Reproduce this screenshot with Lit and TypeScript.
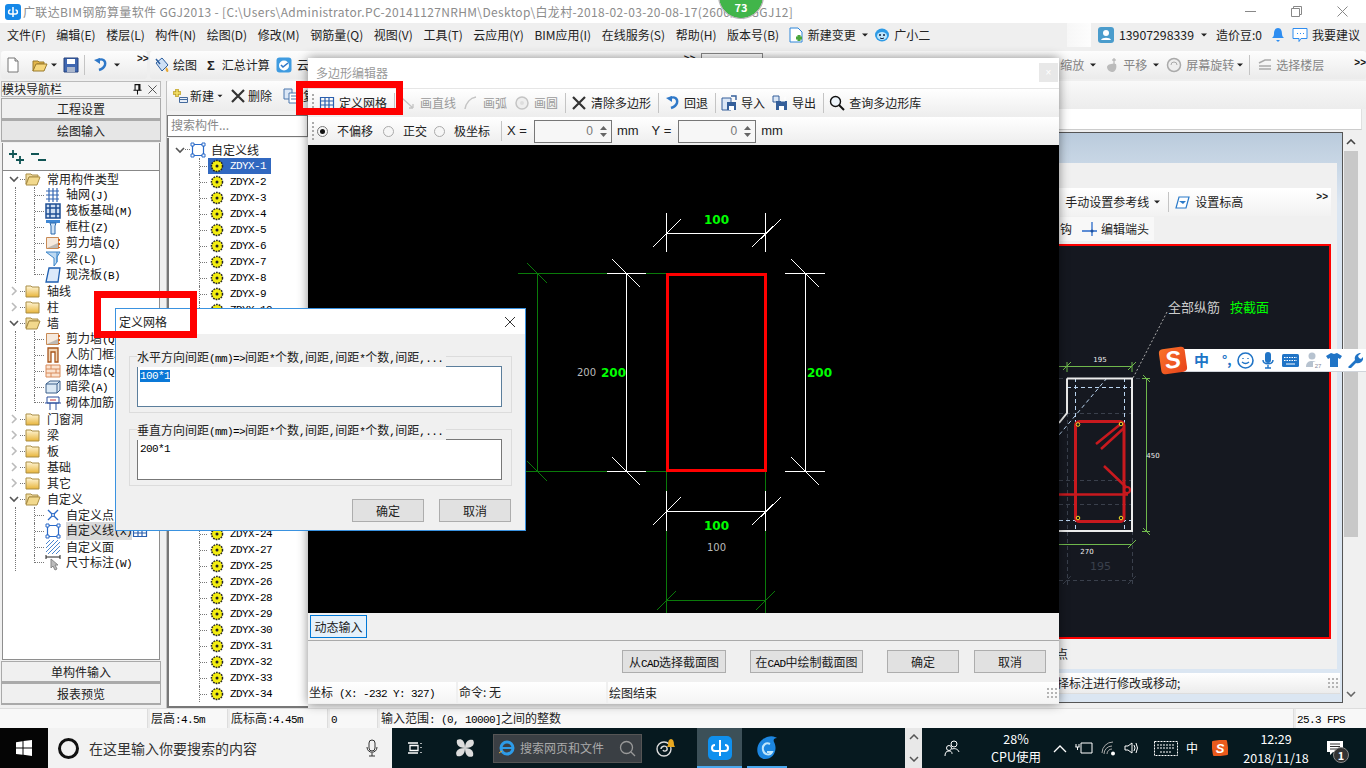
import { LitElement, html, css, svg } from 'lit';
import { customElement } from 'lit/decorators.js';

type Line = number[];

// half width latin next to full width CJK, like the bitmap font of the app
const mix = (text: string) =>
  text.split(/([\x00-\x7f]+)/).map((part, i) => (i % 2 ? html`<span class="lat">${part}</span>` : part));

const icons: Record<string, any> = {
  doc: svg`<path d="M3 1h7l3 3v11H3z" fill="#fff" stroke="#777"/><path d="M10 1v3h3" fill="#ddd" stroke="#777"/>`,
  open: svg`<path d="M1 4h5l1 1h5v2H5L1 14z" fill="#e3b64c" stroke="#9a7a2c"/><path d="M4 7h11l-3 7H1z" fill="#f6d77c" stroke="#9a7a2c"/>`,
  save: svg`<path d="M1 1h14v14H1z" fill="#3f67b1" stroke="#25407a"/><path d="M4 2h8v5H4z" fill="#fff"/><path d="M4 10h8v5H4z" fill="#aab6cc"/>`,
  undo: svg`<path d="M6 3c5-2 8 1 7 5-1 3-3 4-6 5" fill="none" stroke="#2f78c8" stroke-width="2.4"/><path d="M2 3l6-2v6z" fill="#2f78c8"/>`,
  paint: svg`<path d="M2 6l6-5 6 7-6 6z" fill="#cfe0f5" stroke="#2c5e9e"/><path d="M2 2l4 5" stroke="#2c5e9e" stroke-width="1.5"/><path d="M12 10c2 2 3 3 2 5-2 0-3-2-2-5z" fill="#e7a93a"/>`,
  calc: svg`<rect x="0.5" y="0.5" width="15" height="15" rx="3" fill="#3f9be0"/><circle cx="8" cy="8.5" r="5" fill="#fff"/><path d="M5 8l2 2 5-4" fill="none" stroke="#2f78c8" stroke-width="1.6"/>`,
  change: svg`<path d="M2 1h8l4 4v10H2z" fill="#fff" stroke="#2f86d8"/><path d="M8 11h6M11 8v6" stroke="#4aa63c" stroke-width="3"/>`,
  xiao: svg`<ellipse cx="8" cy="8" rx="7" ry="6.5" fill="#2e9be6"/><ellipse cx="8" cy="9" rx="5" ry="4" fill="#bfe6fb"/><circle cx="6" cy="8" r="1" fill="#124"/><circle cx="10" cy="8" r="1" fill="#124"/><path d="M6 11q2 1.4 4 0" fill="none" stroke="#124"/>`,
  user: svg`<rect width="16" height="16" rx="3" fill="#4a9ccc"/><circle cx="8" cy="6" r="3" fill="#fff"/><path d="M3 13c1-3 9-3 10 0z" fill="#fff"/>`,
  bell: svg`<path d="M8 1c3 0 4 3 4 6 0 2 1 3 2 4H2c1-1 2-2 2-4 0-3 1-6 4-6z" fill="#2e8df0"/><path d="M6 13h4l-2 2z" fill="#2e8df0"/>`,
  chat: svg`<path d="M1 1.5h14v10H9l-2 3v-3H1z" fill="#fff" stroke="#2e8df0"/><path d="M5 6.5h1M8 6.5h1M11 6.5h1" stroke="#2e8df0"/>`,
  hand: svg`<path d="M3 10c0-3 6-4 9-3 1 3 0 7-3 8-3 0-6-2-6-5z" fill="#bbb"/><path d="M10 1v6M8 3h4" stroke="#aaa"/>`,
  rotate: svg`<circle cx="8" cy="8" r="6.5" fill="#eee" stroke="#aaa" stroke-width="1.5"/><path d="M5 8a3 3 0 016 0" fill="none" stroke="#aaa"/>`,
  floors: svg`<path d="M2 6l6-3h6M2 9h12M2 12h12" fill="none" stroke="#aaa" stroke-width="1.5"/>`,
  plus: svg`<path d="M5 1v8M1 5h8" stroke="#b99a20" stroke-width="3.5"/><path d="M5 1.5v7M1.5 5h7" stroke="#f6e36b" stroke-width="1.5"/><path d="M7.5 9.5h8v5h-8z" fill="#e8eef7" stroke="#446a9c"/><path d="M7.5 11.5h8" stroke="#446a9c"/>`,
  del: svg`<path d="M2 2l12 12M14 2L2 14" stroke="#333" stroke-width="2.2"/>`,
  copy: svg`<path d="M1 1h8v10H1z" fill="#dbe7f6" stroke="#4a77ad"/><path d="M6 5h9v10H6z" fill="#fff" stroke="#4a77ad"/><path d="M8 8h5M8 11h5" stroke="#4a77ad"/>`,
  pin: svg`<path d="M5 2h6v7H5zM3 9h10M8 9v5" fill="none" stroke="#111" stroke-width="1.3"/><path d="M9 2h2v7H9z" fill="#111"/>`,
  close: svg`<path d="M3 3l10 10M13 3L3 13" stroke="#333" stroke-width="1"/>`,
  expand: svg`<path d="M5 1v8M1 5h8M12 7v8M8 11h8" stroke="#155" stroke-width="1.8"/>`,
  collapse: svg`<path d="M1 5h8M8 11h8" stroke="#155" stroke-width="1.8"/>`,
  folder: svg`<path d="M1 3h5l1 1h7v10H1z" fill="url(#fld)" stroke="#a98d45"/>`,
  folderopen: svg`<path d="M1 3h5l1 1h6v2H4l-3 7z" fill="#f0dca0" stroke="#a98d45"/><path d="M4 6h11l-3 8H1z" fill="#f2d98d" stroke="#a98d45"/>`,
  grid: svg`<path d="M1 4h13M1 8h13M1 12h13M4 1v14M8 1v14M12 1v14" stroke="#3467b4" stroke-width="1.2"/>`,
  raft: svg`<path d="M1 1h14v14H1zM1 5h14M1 11h14M5 1v14M11 1v14" fill="#cfdff2" stroke="#1f4f94" stroke-width="1.5"/>`,
  column: svg`<path d="M1 1h14v3H1z" fill="#3f87d4"/><path d="M5 4h6l-1 3v8H6V7z" fill="#cfe3f7" stroke="#2a68ad"/>`,
  wall: svg`<path d="M1.5 2.5h12v11h-12z" fill="#f6e9dc" stroke="#c88a55"/><path d="M2 13l11-5v5z" fill="#999" opacity=".6"/><path d="M14 4v2M14 8v2M14 12v1" stroke="#d4641e" stroke-width="2"/>`,
  beam: svg`<path d="M1 1h14l-3 5v5l-3 4V7z" fill="#bcd9f2" stroke="#3d86c9"/><path d="M12 1v10" stroke="#3d86c9"/>`,
  slab: svg`<path d="M4 1h11l-2 14H1z" fill="#dbe9fa" stroke="#1f5fb0" stroke-width="1.3"/>`,
  door: svg`<path d="M3 1h10v14h-3V5H6v10H3z" fill="#f1d6b7" stroke="#a8551c" stroke-width="1.3"/>`,
  brick: svg`<path d="M1 2h14v12H1zM1 6h14M1 10h14M6 2v4M11 6v4M6 10v4" fill="#fbe3d0" stroke="#d88a5a"/>`,
  hidden: svg`<path d="M1 5l4-3h10v9l-3 3H1z" fill="#dbe9f5" stroke="#3b5f8a"/><path d="M1 5h11v9M12 5l3-3" fill="none" stroke="#3b5f8a"/>`,
  rebar: svg`<path d="M2 2h12v6H2zM0 8h16M5 8v7M11 8v7" fill="#fff" stroke="#2a4e9c"/><path d="M5 5h6" stroke="#c33"/>`,
  point: svg`<path d="M3 3l10 10M13 3L3 13" stroke="#2a6ac9" stroke-width="1.4"/><circle cx="8" cy="8" r="1.5" fill="#fff" stroke="#2a6ac9"/>`,
  line: svg`<path d="M2.5 2.5h11v11h-11z" fill="none" stroke="#2a6ac9" stroke-width="1.2"/><path d="M1 1h3v3H1zM12 1h3v3h-3zM1 12h3v3H1zM12 12h3v3h-3z" fill="#fff" stroke="#2a6ac9"/>`,
  hatch: svg`<path d="M1 5l4-4M1 9l8-8M1 13L13 1M3 15L15 3M7 15l8-8M11 15l4-4" stroke="#4a86cf"/>`,
  dim: svg`<path d="M1 2h14M1 0v4M15 0v4" stroke="#222"/><path d="M6 4l7 6-3 0 2 4-2 1-2-4-2 2z" fill="#bbb" stroke="#888"/>`,
  gear: svg`<circle cx="8" cy="8" r="5.5" fill="#f4ee10" stroke="#222" stroke-width="1.5" stroke-dasharray="1.7 1"/><circle cx="8" cy="8" r="1.5" fill="#222"/>`,
  mesh: svg`<path d="M1.5 2.5h13v11h-13zM1.5 6h13M1.5 10h13M6 2.5v11M10 2.5v11" fill="none" stroke="#2a5fae" stroke-width="1.2"/>`,
  segment: svg`<path d="M2 3l11 10M13 13V9M13 13H9" fill="none" stroke="#c4c4c4" stroke-width="1.3"/>`,
  arc: svg`<path d="M2 14C3 8 7 3 13 2" fill="none" stroke="#c4c4c4" stroke-width="1.5"/>`,
  circle: svg`<circle cx="8" cy="8" r="6" fill="#eee" stroke="#c4c4c4" stroke-width="1.5"/><circle cx="8" cy="8" r="2" fill="#ddd"/>`,
  import: svg`<path d="M1 3h9v12H1z" fill="#dbe7f6" stroke="#355f9a"/><path d="M6 7h9v8H6z" fill="#355f9a"/><path d="M8 11h5v4H8z" fill="#fff"/><path d="M10 1h5v4" fill="none" stroke="#355f9a" stroke-width="1.4"/>`,
  export: svg`<path d="M1 1h6v6H1z" fill="#dbe7f6" stroke="#355f9a"/><path d="M4 6h11v9H4z" fill="#355f9a"/><path d="M7 11h5v4H7z" fill="#fff"/><path d="M9 6h4V2" fill="none" stroke="#fff"/>`,
  search: svg`<circle cx="6.5" cy="6.5" r="5" fill="#eef5fb" stroke="#111" stroke-width="1.4"/><path d="M10 10l5 5" stroke="#111" stroke-width="2"/>`,
  level: svg`<path d="M5 3h10l-3 11H2z" fill="#fff" stroke="#2a7ac9" stroke-width="1.2"/><path d="M5 7h7l-3 3z" fill="#2a7ac9"/>`,
  endpoint: svg`<path d="M0 10h15M10 1v14" stroke="#2a6ac9" stroke-width="1.3"/><circle cx="10" cy="10" r="1.5" fill="#1d4f9c"/>`,
  caret: svg`<path d="M4 6h8l-4 4z" fill="#222"/>`,
};

const ic = (name: string, size = 16) =>
  html`<svg class="ic" width=${size} height=${size} viewBox="0 0 16 16">${icons[name]}</svg>`;

const chevron = (open: boolean) =>
  html`<svg class="chev" width="10" height="10" viewBox="0 0 10 10">
    <path d=${open ? 'M1 3l4 4 4-4' : 'M3 1l4 4-4 4'} fill="none" stroke=${open ? '#555' : '#bbb'} stroke-width="1.6"/>
  </svg>`;

const menus = ['文件(F)', '编辑(E)', '楼层(L)', '构件(N)', '绘图(D)', '修改(M)', '钢筋量(Q)', '视图(V)', '工具(T)', '云应用(Y)', 'BIM应用(I)', '在线服务(S)', '帮助(H)', '版本号(B)'];

const navTree: any[] = [
  { label: '常用构件类型', open: true },
  { label: '轴网(J)', icon: 'grid' },
  { label: '筏板基础(M)', icon: 'raft' },
  { label: '框柱(Z)', icon: 'column' },
  { label: '剪力墙(Q)', icon: 'wall' },
  { label: '梁(L)', icon: 'beam' },
  { label: '现浇板(B)', icon: 'slab', last: true },
  { label: '轴线' },
  { label: '柱' },
  { label: '墙', open: true },
  { label: '剪力墙(Q)', icon: 'wall' },
  { label: '人防门框墙(RF)', icon: 'door' },
  { label: '砌体墙(Q)', icon: 'brick' },
  { label: '暗梁(A)', icon: 'hidden' },
  { label: '砌体加筋(Y)', icon: 'rebar', last: true },
  { label: '门窗洞' },
  { label: '梁' },
  { label: '板' },
  { label: '基础' },
  { label: '其它' },
  { label: '自定义', open: true },
  { label: '自定义点', icon: 'point' },
  { label: '自定义线(X)', icon: 'line', active: true },
  { label: '自定义面', icon: 'hatch' },
  { label: '尺寸标注(W)', icon: 'dim', last: true },
];

// rows 11 to 23 sit behind the dialog and the editor
const zdyxTop = [1, 2, 3, 4, 5, 6, 7, 8, 9, 10];
const zdyxBottom = [24, 27, 25, 26, 28, 29, 30, 31, 32, 33, 34];

const editorTools: [string, string, boolean, boolean][] = [
  ['mesh', '定义网格', false, true],
  ['segment', '画直线', true, false],
  ['arc', '画弧', true, false],
  ['circle', '画圆', true, true],
  ['del', '清除多边形', false, true],
  ['undo', '回退', false, true],
  ['import', '导入', false, false],
  ['export', '导出', false, true],
  ['search', '查询多边形库', false, false],
];

// main drawing, in page coordinates
const whiteLines: Line[] = [
  [666.5, 233.5, 765.5, 233.5], [666.5, 213, 666.5, 252], [765.5, 213, 765.5, 252],
  [653, 247, 681, 219], [752, 247, 781, 219],
  [626.5, 273, 626.5, 471], [607, 273.5, 646, 273.5], [607, 471.5, 646, 471.5],
  [612, 259, 640, 287], [612, 457, 640, 485],
  [805.5, 273, 805.5, 471], [785, 273.5, 825, 273.5], [785, 471.5, 825, 471.5],
  [791, 259, 819, 287], [791, 457, 819, 485],
  [666.5, 511.5, 765.5, 511.5], [666.5, 491, 666.5, 531], [765.5, 491, 765.5, 531],
  [653, 525, 681, 497], [752, 525, 781, 497],
];
const greenLines: Line[] = [
  [518, 273.5, 607, 273.5], [646, 273.5, 667, 273.5], [537.5, 273, 537.5, 471],
  [526, 471.5, 607, 471.5], [646, 471.5, 667, 471.5], [527, 263, 547, 283], [527, 461, 547, 481],
  [666.5, 471, 666.5, 491], [765.5, 471, 765.5, 491], [666.5, 531, 666.5, 613], [765.5, 531, 765.5, 613],
  [666.5, 600.5, 765.5, 600.5], [657, 610, 676, 591], [756, 610, 775, 591],
];
const cadGreens: Line[] = [
  [1059, 366.5, 1132, 366.5], [1067, 362, 1067, 372], [1132, 362, 1132, 372], [1063, 370, 1071, 362], [1128, 370, 1136, 362],
  [1146.5, 378, 1146.5, 532], [1142, 378.5, 1150, 378.5], [1142, 531.5, 1150, 531.5], [1143, 375, 1150, 382], [1143, 528, 1150, 535],
  [1059, 544.5, 1132, 544.5], [1128, 548, 1136, 540],
];
const cadDark: Line[] = [
  [1059, 378.5, 1150, 378.5], [1059, 413.5, 1132, 413.5], [1059, 480.5, 1132, 480.5], [1059, 504.5, 1132, 504.5],
  [1059, 580.5, 1136, 580.5], [1067.5, 378, 1067.5, 586], [1132.5, 531, 1132.5, 586], [1128, 584, 1136, 576], [1063, 584, 1071, 576],
];
const cadDashed: Line[] = [
  [1067, 387.5, 1132, 387.5], [1075.5, 378, 1075.5, 530], [1124.5, 378, 1124.5, 530],
  [1107, 378, 1059, 435], [1059, 520.5, 1132, 520.5],
];
const lines = (list: Line[], cls: string) =>
  list.map(([a, b, c, d]) => svg`<line class=${cls} x1=${a} y1=${b} x2=${c} y2=${d}></line>`);

@customElement('app-root')
export class AppRoot extends LitElement {
  static styles = css`
    :host {
      display: flex;
      flex-direction: column;
      position: relative;
      width: 1366px;
      height: 768px;
      overflow: hidden;
      background: #f0f0f0;
      color: #222;
      font: 12px/16px "Noto Sans CJK SC", "Liberation Sans", sans-serif;
    }
    .ic { flex: none; display: block; }
    .chev { flex: none; display: block; }
    .lat { font-family: "Liberation Mono", monospace; font-size: 11px; letter-spacing: -.6px; color: #000; }
    .defs { position: absolute; }

    .titlebar { display: flex; align-items: center; flex: none; height: 23px; padding-left: 5px; background: #fff; color: #8c8c8c; letter-spacing: .35px; white-space: nowrap; }
    .logo { width: 16px; height: 16px; border-radius: 3px; background: #1588e8; margin-right: 2px; display: flex; align-items: center; justify-content: center; }
    .wincontrols { display: flex; margin-left: auto; margin-right: 1px; }
    .wincontrols span { display: flex; justify-content: center; width: 46px; }

    .menubar { display: flex; align-items: center; flex: none; height: 24px; padding-left: 7px; gap: 10.6px; background: #efefef; white-space: nowrap; }
    .menubar .tool { display: flex; align-items: center; gap: 4px; }
    .menubar .change { margin-left: -2px; }
    .menubar .change .ic:last-child { margin-left: -1px; }
    .menubar .xiaoer { margin-left: -7px; }
    .menubar .right { display: flex; align-items: center; margin-left: auto; margin-right: 6px; gap: 4px; }
    .menubar .lighter { width: 24px; height: 24px; margin-right: 3px; background: linear-gradient(90deg, #f7f7f7, #fdfdfd); }
    .menubar .num { font-size: 12.3px; margin-left: 1px; }
    .menubar .beans { margin: 0 4px 0 2px; }
    .menubar .chaticon { margin-left: 2px; }

    .toolbar { display: flex; flex: none; height: 34px; padding: 4px 0 1px 1px; gap: 3px; background: #efefef; box-sizing: border-box; }
    .tgroup { display: flex; align-items: center; padding-left: 4px; height: 28px; border-radius: 3px; background: linear-gradient(#fdfdfd, #ebebeb); white-space: nowrap; }
    .tgroup.fixed { flex: none; width: 146px; box-sizing: border-box; }
    .tgroup.wide { flex: 1; }
    .more { font: bold 10px/10px "Liberation Sans", sans-serif; align-self: flex-start; margin-top: 3px; }
    .sep { flex: none; width: 1px; height: 20px; background: #c4c4c4; }
    .t-open { margin-left: 11px; }
    .t-save { margin: 0 5px 0 3px; }
    .t-undo { margin: 0 3px 0 7px; }
    .t-more { margin-left: 14px; }
    .t-paint { margin: 0 10px 0 3px; }
    .t-sigma { font: 700 13px "Liberation Sans", sans-serif; margin-right: 7px; }
    .t-sum { margin-right: 6px; }
    .t-cloud { margin-left: 5px; }
    .t-hiddenmore { margin-left: 375px; }
    .combo { flex: none; align-self: flex-end; width: 62px; height: 26px; margin-left: 5px; border: 1px solid #888; background: #fff; box-sizing: border-box; }
    .faded { display: flex; align-items: center; color: #858585; margin-left: auto; }
    .f-caret0 { margin: 0 5px 0 3px; }
    .f-hand { margin-right: 3px; }
    .f-caret1 { margin: 0 4px 0 3px; }
    .f-rotate { margin-right: 4px; }
    .f-sep { margin: 0 7px 0 3px; }
    .f-floors { margin: 0 30px 0 3px; }
    .f-more { color: #111; }

    .main { display: flex; flex: 1; min-height: 0; }
    .nav { display: flex; flex-direction: column; flex: none; width: 162px; padding: 0 1px 3px; box-sizing: border-box; }
    .navtitle { display: flex; align-items: center; justify-content: space-between; flex: none; height: 16px; box-sizing: border-box; padding-right: 1px; border: 1px solid #bbb; background: #f3f3f3; }
    .navtitle div { display: flex; gap: 2px; }
    .navbtn { flex: none; height: 22px; line-height: 20px; box-sizing: border-box; text-align: center; border: 1px solid #aaa; border-width: 1px 1px 2px 1px; background: #f0f0f0; }
    .navbtn.top { margin-top: 1px; }
    .navbtn.pressed { background: #e6e6e6; }
    .navtree { flex: 1; margin: 1px 1px 1px; display: flex; flex-direction: column; border: 1px solid #8e8e8e; border-width: 0 1px 1px; background: #fff; overflow: hidden; min-height: 0; }
    .navtools { display: flex; align-items: center; flex: none; gap: 6px; height: 28px; box-sizing: border-box; padding-left: 5px; border-bottom: 1px solid #888; background: #f8f8f8; }
    .treebody { flex: 1; min-height: 0; }
    .row { display: flex; align-items: center; height: 16px; white-space: nowrap; }
    .row.root { padding-left: 6px; }
    .row.root .stub { width: 6px; margin-left: 1px; }
    .stub { height: 1px; background: repeating-linear-gradient(90deg, #777 0 1px, transparent 1px 2px); }
    .rootfolder { margin: 0 6px 0 -1px; }
    .row.child { padding-left: 12px; }
    .g1 { flex: none; width: 19px; height: 16px; box-sizing: border-box; border-left: 1px dotted #777; }
    .g2 { flex: none; width: 11px; height: 16px; box-sizing: border-box; border-left: 1px dotted #777; display: flex; align-items: center; }
    .g2 .stub { flex: 1; }
    .g2.last { height: 8px; align-self: flex-start; align-items: flex-end; }
    .lbl { margin-left: 5px; }
    .child.active .lbl { background: #d9d9d9; }
    .child.active .mini { flex: none; }

    .list { display: flex; flex-direction: column; flex: none; width: 141px; margin-left: 4px; border-left: 1px solid #c0c0c0; }
    .listtools { display: flex; align-items: center; flex: none; height: 30px; padding-left: 5px; background: linear-gradient(#fdfdfd, #ececec); border-radius: 3px; white-space: nowrap; }
    .l-new { margin-left: 2px; }
    .l-caret { margin: 0 5px 0 1px; }
    .l-del { margin: 0 5px 0 2px; }
    .l-copy { margin: 0 4px 0 6px; }
    .searchbox { flex: none; height: 22px; box-sizing: border-box; line-height: 18px; margin-top: 4px; padding-left: 3px; border: 1px solid #777; color: #888; background: #fff; }
    .listtree { flex: 1; margin-top: 1px; padding-top: 3px; min-height: 0; overflow: hidden; background: #fff; border: 1px solid #777; border-width: 0 0 2px 2px; }
    .listroot { display: flex; align-items: center; height: 17px; padding-left: 6px; }
    .listroot .stub { width: 5px; }
    .listroot span:last-child { margin-left: 5px; }
    .item { display: flex; align-items: center; height: 16px; padding-left: 30px; }
    .vguide { flex: none; width: 9px; height: 16px; box-sizing: border-box; border-left: 1px dotted #777; display: flex; align-items: center; }
    .vguide .stub { flex: 1; }
    .item .sel { display: flex; align-items: center; gap: 5px; height: 16px; padding: 0 5px 0 1px; font: 11px/16px "Liberation Mono", monospace; letter-spacing: -.6px; color: #000; }
    .item .sel.on { background: #3168c0; color: #fff; }
    .skip { height: 208px; margin-left: 30px; box-sizing: border-box; border-left: 1px dotted #777; }

    .work { display: flex; flex-direction: column; flex: 1; min-width: 0; }
    .workstrip { flex: none; height: 28px; background: linear-gradient(#f9f9f9, #ececec); }
    .workinput { flex: none; height: 21px; box-sizing: border-box; margin-right: 4px; background: #fff; border-bottom: 1px solid #ccc; border-right: 1px solid #e0e0e0; }
    .workrow { display: flex; flex: 1; min-height: 0; margin-top: 2px; padding-bottom: 5px; }
    .frame { display: flex; flex-direction: column; flex: 1; min-width: 0; padding: 0 5px 8px 0; border: 1px solid #555; border-width: 1px 1px 1px 0; background: linear-gradient(#bacbdc, #dbe6f2 70px); box-sizing: border-box; }
    .framepanel { flex: 1; display: flex; flex-direction: column; min-height: 0; margin-top: 30px; padding: 25px 6px 0 0; background: #f0f0f0; }
    .toolrow { display: flex; align-items: center; justify-content: flex-end; flex: none; height: 28px; box-sizing: border-box; padding: 0 3px 2px 0; border-top: 1px solid #fff; background: linear-gradient(#fff, #f2f2f2); gap: 5px; }
    .toolrow .more { margin-left: 68px; }
    .toolrow .tight { margin-right: -3px; }
    .toolrow2 { display: flex; justify-content: flex-end; flex: none; height: 28px; padding: 1px 177px 3px 0; box-sizing: border-box; }
    .toolrow2 div { display: flex; align-items: center; gap: 3px; padding: 0 5px 0 0; background: #f8f8f8; }
    .toolrow2 i { width: 4px; }
    .cad { flex: none; display: flex; justify-content: flex-end; height: 395px; box-sizing: border-box; border: 2px solid #f00; background: #151820; }
    .cad svg { display: block; flex: none; }
    .framefoot { flex: 1; display: flex; align-items: center; padding-left: 748px; background: #f0f0f0; }
    .framestatus { display: flex; align-items: center; flex: none; height: 21px; box-sizing: border-box; margin-top: 4px; margin-right: -3px; padding: 0 2px 0 749px; background: linear-gradient(#fff, #ececec); border-bottom: 1px solid #ddd; white-space: nowrap; }
    .corner { flex: none; width: 10px; height: 10px; margin-left: auto; background: radial-gradient(circle at 1px 1px, #b4b4b4 1px, transparent 1.3px) 0 0/4px 4px; }
    .scroll { display: flex; flex-direction: column; flex: none; width: 14px; margin: 1px 8px 0 1px; background: #f0f0f0; }
    .scroll span { flex: none; display: flex; justify-content: center; align-items: center; height: 18px; }
    .scroll i { flex: none; display: block; height: 386px; background: #c8c8c8; }
    .scroll b { flex: 1; }

    .statusbar { display: flex; flex: none; height: 20px; gap: 2px; background: #ececec; border-top: 1px solid #ddd; box-sizing: border-box; }
    .statusbar div { padding-left: 1px; line-height: 18px; height: 19px; box-sizing: border-box; background: #f8f8f8; border-right: 1px solid #ddd; white-space: nowrap; }
    .s0 { width: 148px; }
    .s1 { width: 78px; }
    .s2 { width: 98px; }
    .s3 { width: 48px; }
    .statusbar .grow { flex: 1; }
    .statusbar .s4 { width: 70px; border-right: 0; }

    .taskbar { display: flex; align-items: center; flex: none; height: 40px; background: #06191f; color: #fff; }
    .start { display: flex; align-items: center; justify-content: center; width: 48px; height: 40px; background: #050505; }
    .cortana { display: flex; align-items: center; width: 344px; height: 40px; padding-left: 10px; box-sizing: border-box; background: #f2f2f2; color: #333; font-size: 14px; }
    .ring { width: 15px; height: 15px; margin-right: 10px; border: 3px solid #111; border-radius: 50%; }
    .cortana svg { margin-left: 107px; }
    .tb-btn { display: flex; align-items: center; justify-content: center; flex: none; height: 40px; }
    .tb-view { width: 46px; }
    .tb-wheel { width: 54px; }
    .tb-swirl { width: 55px; padding-right: 10px; box-sizing: border-box; }
    .tb-people { width: 16px; margin-left: 22px; }
    .tb-search { display: flex; align-items: center; width: 149px; height: 29px; margin-left: 1px; padding-left: 4px; box-sizing: border-box; gap: 4px; background: #3a3f44; border: 1px solid #555; color: #aaa; }
    .tb-search span { flex: 1; }
    .tb-search svg:last-child { margin-right: 5px; }
    .tile { position: relative; width: 45px; background: #3c5058; }
    .tile2 { position: relative; width: 40px; margin-left: 5px; }
    .tile::after, .tile2::after { content: ""; position: absolute; left: 0; right: 0; bottom: 0; height: 2px; background: #4aa8ee; }
    .scrollstrip { display: flex; flex-direction: column; justify-content: space-between; align-items: center; width: 17px; height: 40px; margin-left: 118px; padding: 6px 0; box-sizing: border-box; background: #e8e8e8; }
    .cpu { width: 70px; margin-left: 21px; text-align: center; line-height: 18px; font-size: 12.5px; }
    .tray { display: flex; align-items: center; gap: 8px; margin-left: 2px; }
    .tray .kbd { margin-left: 6px; }
    .tray .sogou { margin-left: 6px; }
    .clock { width: 82px; margin-left: 7px; text-align: center; line-height: 19px; font-size: 12.5px; }
    .notify { position: relative; flex: none; margin-left: 10px; width: 22px; height: 40px; }
    .notify svg { display: block; margin-top: 12px; }
    .badge { position: absolute; left: 6px; top: 19px; width: 16px; height: 16px; line-height: 15px; text-align: center; border-radius: 50%; background: #333; border: 1px solid #888; box-sizing: border-box; font-weight: 700; font-size: 11px; }

    /* windows and overlays on the desktop */
    .editor { position: absolute; left: 308px; top: 58px; display: flex; flex-direction: column; width: 751px; height: 646px; background: #f0f0f0; box-shadow: 0 0 10px rgba(0, 0, 0, .45); }
    .edtitle { display: flex; align-items: center; justify-content: space-between; flex: none; height: 31px; padding: 0 1px 0 8px; color: #999; background: #fff; border-bottom: 1px solid #e6e6e6; box-sizing: border-box; }
    .edclose { width: 19px; height: 19px; margin-bottom: 2px; display: flex; align-items: center; justify-content: center; background: #e8e8e8; color: #fff; font: 10px "Liberation Sans", sans-serif; }
    .edtools { display: flex; align-items: center; flex: none; height: 28px; padding-left: 4px; background: linear-gradient(#fff, #ededed); white-space: nowrap; }
    .grip { flex: none; width: 2px; height: 18px; margin-right: 5px; background: repeating-linear-gradient(#aaa 0 2px, transparent 2px 4px); }
    .edtool { display: flex; align-items: center; gap: 4px; }
    .edtool.off { color: #9a9a9a; }
    .edtools .sep { margin: 0 5px 0 7px; }
    .sp { flex: none; width: 7px; }
    .edoptions { display: flex; align-items: center; flex: none; height: 28px; padding-left: 4px; background: linear-gradient(#fff, #ededed); white-space: nowrap; }
    .edoptions .grip { margin-right: 3px; }
    .edoptions .sep { margin: 0 5px 0 11px; }
    .radio { flex: none; width: 11px; height: 11px; margin-right: 9px; border: 1px solid #aaa; border-radius: 50%; box-sizing: border-box; background: #f6f6f6; display: flex; align-items: center; justify-content: center; }
    .radio.on { border-color: #777; }
    .radio.on::after { content: ""; width: 5px; height: 5px; border-radius: 50%; background: #111; }
    .opt { margin-right: 10px; }
    .opt.near { margin-right: 7px; }
    .opt.end { margin-right: 0; }
    .spin { display: flex; align-items: center; justify-content: flex-end; width: 78px; height: 23px; margin: 0 5px 0 7px; padding-right: 4px; border: 1px solid #777; box-sizing: border-box; color: #777; background: #f7f7f7; font-family: "Liberation Sans", sans-serif; gap: 7px; }
    .spinbtn { display: flex; flex-direction: column; gap: 3px; }
    .fld { font-family: "Liberation Sans", sans-serif; font-size: 13px; }
    .fld.mid { margin-right: 13px; }
    .edcanvas { flex: none; height: 468px; background: #000; }
    .edcanvas svg { display: block; }
    .dyn { flex: none; height: 28px; box-sizing: border-box; padding: 2px 0 0 2px; border-bottom: 1px solid #aaa; background: #f0f0f0; }
    .dyn span { display: block; width: 57px; height: 23px; line-height: 21px; text-align: center; box-sizing: border-box; border: 1px solid #0078d7; background: #e5f1fb; }
    .edbtns { display: flex; justify-content: flex-end; align-items: flex-start; flex: 1; padding: 9px 13px 0 0; gap: 24px; }
    .winbtn { height: 23px; line-height: 21px; text-align: center; box-sizing: border-box; border: 1px solid #adadad; background: #e1e1e1; }
    .w72 { width: 72px; }
    .w104 { width: 104px; }
    .w113 { width: 113px; }
    .edbtns .w72:last-child { margin-left: -9px; }
    .edstatus { display: flex; flex: none; height: 21px; gap: 2px; margin-bottom: 1px; }
    .edstatus div { line-height: 19px; padding-left: 1px; background: linear-gradient(#fff, #f4f4f4); box-sizing: border-box; }
    .c148 { width: 148px; }
    .edstatus .rest { display: flex; align-items: center; flex: 1; padding-right: 2px; }

    .dialog { position: absolute; left: 115px; top: 308px; display: flex; flex-direction: column; width: 411px; height: 223px; box-sizing: border-box; border: 1px solid #3a92e0; background: #f0f0f0; }
    .dltitle { display: flex; align-items: center; justify-content: space-between; flex: none; height: 25px; padding: 0 7px 0 3px; background: #fff; }
    .dlgroup { position: relative; height: 57px; margin: 0 13px; border: 1px solid #dcdcdc; padding: 9px 9px 0 7px; box-sizing: border-box; }
    .dlgroup.first { margin-top: 22px; }
    .dlgroup.second { margin-top: 16px; }
    .legend { position: absolute; left: 7px; top: -8px; padding-right: 3px; background: #f0f0f0; white-space: nowrap; }
    .area { height: 41px; padding: 3px 2px; box-sizing: border-box; border: 1px solid #777; background: #fff; font: 11px/13px "Liberation Mono", monospace; letter-spacing: -.6px; color: #000; }
    .area.focus { border-color: #5b7e9c; }
    .area mark { background: #0a78d7; color: #fff; }
    .dlbtns { display: flex; justify-content: flex-end; flex: none; gap: 15px; margin-top: 13px; padding-right: 14px; }

    .redbox { position: absolute; box-sizing: border-box; border: 7px solid #f00; }
    .r1 { left: 296px; top: 81px; width: 107px; height: 34px; }
    .r2 { left: 94px; top: 291px; width: 103px; height: 47px; }

    .bubble { position: absolute; left: 717px; top: 0; width: 48px; height: 20px; background: radial-gradient(circle at 24px -4px, #41b54a 0 21.5px, #b5b5b5 22px 22.5px, transparent 23.5px); color: #fff; font-weight: 700; font-size: 11px; text-align: center; line-height: 14px; }

    .ime { position: absolute; left: 1160px; top: 347px; display: flex; align-items: center; width: 206px; height: 27px; }
    .ime .logo-s { position: relative; flex: none; width: 26px; height: 25px; margin-right: -6px; transform: rotate(-8deg); border-radius: 4px; background: linear-gradient(135deg, #f9722a, #e8431a); color: #fff; font: italic 700 24px/24px "Liberation Sans", sans-serif; text-align: center; }
    .ime .imebar { display: flex; flex: 1; align-items: center; height: 23px; padding-left: 14px; box-sizing: border-box; background: #fff; border-bottom: 1px solid #d0d4da; color: #2074c6; }
    .ime .zh { flex: none; width: 15px; font-size: 15px; font-weight: 700; margin-right: 13px; }
    .ime .pun { flex: none; width: 15px; font-size: 13px; font-weight: 700; }
    .ime .m8 { margin-right: 8px; }
    .ime .m6 { margin-right: 6px; }
    .ime .m3 { margin-right: 3px; }
    .ime .m5 { margin-right: 5px; }
  `;

  private navRow(node: any) {
    if (!node.icon) {
      return html`<div class="row root">
        ${chevron(!!node.open)}<span class="stub"></span>
        <span class="rootfolder">${ic(node.open ? 'folderopen' : 'folder')}</span>${node.label}
      </div>`;
    }
    return html`<div class="row child ${node.active ? 'active' : ''}">
      <span class="g1"></span><span class="g2 ${node.last ? 'last' : ''}"><span class="stub"></span></span>
      ${ic(node.icon)}<span class="lbl">${mix(node.label)}</span>
      ${node.active ? html`<span class="mini">${ic('mesh')}</span>` : ''}
    </div>`;
  }

  private zdyxRow(n: number) {
    return html`<div class="item">
      <span class="vguide"><span class="stub"></span></span>
      <span class="sel ${n === 1 ? 'on' : ''}">${ic('gear')}ZDYX-${n}</span>
    </div>`;
  }

  private cadMain() {
    return html`<svg width="751" height="468" viewBox="308 145 751 468">
      <g shape-rendering="crispEdges" fill="none">
        <g stroke="#0a7a0a">${lines(greenLines, 'g')}</g>
        <g stroke="#fff">${lines(whiteLines, 'w')}</g>
        <rect x="667.5" y="274.5" width="98" height="196" stroke="#f00" stroke-width="3.5"></rect>
      </g>
      <g font-family="DejaVu Sans" font-weight="700" font-size="12" fill="#00ff00" text-anchor="middle">
        <text x="716.5" y="224">100</text>
        <text x="716.5" y="530">100</text>
        <text x="613.5" y="377">200</text>
        <text x="819.5" y="377">200</text>
      </g>
      <g font-family="DejaVu Sans" font-size="10" fill="#bbb" text-anchor="middle">
        <text x="586.5" y="376">200</text>
        <text x="716.5" y="551">100</text>
      </g>
    </svg>`;
  }

  private cadSide() {
    return html`<svg width="270" height="391" viewBox="1059 246 270 391">
      <g fill="none">
        <g stroke="#3a404c" stroke-dasharray="4 3">${lines(cadDark, 'd')}</g>
        <g stroke="#b9d4f0" stroke-dasharray="4 3">${lines(cadDashed, 'b')}</g>
        <g stroke="#6fb84c">${lines(cadGreens, 'l')}</g>
        <path d="M1167 312L1133 378" stroke="#aaa" stroke-dasharray="2 2"></path>
        <path d="M1067 378.5H1132V531H1059M1067 378.5V413L1059 423" stroke="#ececec" stroke-width="2"></path>
        <rect x="1075.5" y="421.5" width="48.5" height="100" rx="4" stroke="#c8191e" stroke-width="3"></rect>
        <path d="M1122 423L1096 444M1124 428L1101 449M1104 466L1126 487M1059 494.5H1128" stroke="#c8191e" stroke-width="2.5"></path>
        <circle cx="1127" cy="490" r="3" stroke="#c8191e" stroke-width="2"></circle>
        <g stroke="#f0dc28" fill="#151820">
          <circle cx="1078" cy="424.5" r="1.8"></circle><circle cx="1121" cy="424" r="1.8"></circle>
          <circle cx="1078" cy="518" r="1.8"></circle><circle cx="1121" cy="518" r="1.8"></circle>
        </g>
      </g>
      <text x="1168" y="312" font-size="13" fill="#ccc" font-family="Noto Sans CJK SC">全部纵筋</text>
      <text x="1230" y="312" font-size="13" fill="#0f0" font-family="Noto Sans CJK SC">按截面</text>
      <g font-family="DejaVu Sans" font-size="7" fill="#eee" text-anchor="middle">
        <text x="1100" y="362">195</text><text x="1153" y="458">450</text><text x="1087" y="554">270</text>
      </g>
      <text x="1100.5" y="570" font-family="DejaVu Sans" font-size="11" fill="#3a404c" text-anchor="middle">195</text>
    </svg>`;
  }

  private editor() {
    const tools = editorTools.map(([icon, label, off, sep], i) => html`
      <span class="edtool ${off ? 'off' : ''}">${ic(icon)}${label}</span>
      ${sep ? html`<span class="sep"></span>` : i < editorTools.length - 1 ? html`<span class="sp"></span>` : ''}
    `);
    const spin = html`<span class="spinbtn">
      <svg width="7" height="4" viewBox="0 0 7 4"><path d="M0 4l3.5-4L7 4z" fill="#666"/></svg>
      <svg width="7" height="4" viewBox="0 0 7 4"><path d="M0 0l3.5 4L7 0z" fill="#666"/></svg>
    </span>`;
    return html`<div class="editor">
      <div class="edtitle">多边形编辑器<span class="edclose">×</span></div>
      <div class="edtools"><span class="grip"></span>${tools}</div>
      <div class="edoptions">
        <span class="grip"></span>
        <span class="radio on"></span><span class="opt">不偏移</span>
        <span class="radio"></span><span class="opt near">正交</span>
        <span class="radio"></span><span class="opt end">极坐标</span>
        <span class="sep"></span>
        <span class="fld">X =</span><span class="spin">0 ${spin}</span><span class="fld mid">mm</span>
        <span class="fld">Y =</span><span class="spin">0 ${spin}</span><span class="fld">mm</span>
      </div>
      <div class="edcanvas">${this.cadMain()}</div>
      <div class="dyn"><span>动态输入</span></div>
      <div class="edbtns">
        <span class="winbtn w104">${mix('从CAD选择截面图')}</span>
        <span class="winbtn w113">${mix('在CAD中绘制截面图')}</span>
        <span class="winbtn w72">确定</span>
        <span class="winbtn w72">取消</span>
      </div>
      <div class="edstatus">
        <div class="c148">${mix('坐标 (X: -232 Y: 327)')}</div>
        <div class="c148">命令: 无</div>
        <div class="rest">绘图结束<span class="corner"></span></div>
      </div>
    </div>`;
  }

  private dialog() {
    const legend = (dir: string) => mix(`${dir}方向间距(mm)=>间距*个数,间距,间距*个数,间距,...`);
    return html`<div class="dialog">
      <div class="dltitle">定义网格${ic('close')}</div>
      <div class="dlgroup first">
        <span class="legend">${legend('水平')}</span>
        <div class="area focus"><mark>100*1</mark></div>
      </div>
      <div class="dlgroup second">
        <span class="legend">${legend('垂直')}</span>
        <div class="area">200*1</div>
      </div>
      <div class="dlbtns">
        <span class="winbtn w72">确定</span><span class="winbtn w72">取消</span>
      </div>
    </div>`;
  }

  private taskbar() {
    const chevUp = html`<svg width="10" height="6" viewBox="0 0 10 6"><path d="M1 5l4-4 4 4" fill="none" stroke="#555" stroke-width="1.5"/></svg>`;
    const chevDown = html`<svg width="10" height="6" viewBox="0 0 10 6"><path d="M1 1l4 4 4-4" fill="none" stroke="#555" stroke-width="1.5"/></svg>`;
    return html`<div class="taskbar">
      <div class="start"><svg width="16" height="16" viewBox="0 0 16 16"><path d="M0 2.2l6.5-1v6.4H0zM7.5 1L16 0v7.6H7.5zM0 8.5h6.5v6.3L0 14zM7.5 8.5H16V16l-8.5-1.2z" fill="#fff"/></svg></div>
      <div class="cortana">
        <span class="ring"></span>在这里输入你要搜索的内容
        <svg width="16" height="20" viewBox="0 0 16 20"><rect x="5" y="2" width="6" height="11" rx="3" fill="none" stroke="#333"/><path d="M3 9c0 7 10 7 10 0M8 15v3M5 18h6" fill="none" stroke="#333"/></svg>
      </div>
      <span class="tb-btn tb-view"><svg width="16" height="16" viewBox="0 0 16 16"><path d="M1 3h10M1 13h10M3 5.5h8v5H3zM14 3v1M14 7v1M14 12v1" fill="none" stroke="#fff" stroke-width="1.3"/></svg></span>
      <span class="tb-btn tb-wheel"><svg width="22" height="22" viewBox="0 0 22 22"><g fill="#ddd"><path d="M11 11C4 11 2 7 3 3c3-2 8-1 8 8z"/><path d="M11 11c0-7 4-9 8-8 2 3 1 8-8 8z"/><path d="M11 11c7 0 9 4 8 8-3 2-8 1-8-8z"/><path d="M11 11c0 7-4 9-8 8-2-3-1-8 8-8z"/></g></svg></span>
      <div class="tb-search">
        <svg width="18" height="18" viewBox="0 0 18 18"><circle cx="9" cy="9" r="6" fill="none" stroke="#2d9be8" stroke-width="3"/><path d="M3 9h12" stroke="#2d9be8" stroke-width="2"/><path d="M1 14l3-2" stroke="#e8b23a" stroke-width="1"/></svg>
        <span>搜索网页和文件</span>
        <svg width="17" height="17" viewBox="0 0 17 17"><circle cx="7.5" cy="7.5" r="6" fill="none" stroke="#999" stroke-width="1.3"/><path d="M12 12l4 4" stroke="#999" stroke-width="1.3"/></svg>
      </div>
      <span class="tb-btn tb-swirl"><svg width="24" height="24" viewBox="0 0 24 24"><circle cx="11" cy="13" r="7" fill="none" stroke="#ddd" stroke-width="1.4"/><path d="M8 13c0-3 5-4 6-1s-3 4-4 2" fill="none" stroke="#ddd" stroke-width="1.4"/><path d="M15 9c0-4 1-6 3-6s3 2 3 6l1 2h-8z" fill="#e8a820"/></svg></span>
      <span class="tb-btn tile"><svg width="24" height="24" viewBox="0 0 24 24"><rect width="24" height="24" rx="5" fill="#0f90ee"/><path d="M12 4v16M7 9c-4 0-4 6 0 6h10c4 0 4-6 0-6" fill="none" stroke="#fff" stroke-width="2"/></svg></span>
      <span class="tb-btn tile2"><svg width="24" height="26" viewBox="0 0 24 26"><path d="M12 2c5-2 9 0 10 1-3 0-4 2-3 4 4 7 0 17-9 17C2 24 0 13 5 7c2-3 5-4 7-5z" fill="#1c86e0"/><path d="M15 9c-4-2-8 1-7 6s7 6 9 2h-5" fill="none" stroke="#bfe6fb" stroke-width="2"/></svg></span>
      <div class="scrollstrip">${chevUp}${chevDown}</div>
      <span class="tb-btn tb-people"><svg width="16" height="18" viewBox="0 0 16 18"><circle cx="10" cy="5" r="3" fill="none" stroke="#fff"/><circle cx="5" cy="9" r="2.5" fill="none" stroke="#fff"/><path d="M1 17c0-3 1-5 4-5s3 2 3 3M8 10c3-1 6 0 7 3" fill="none" stroke="#fff"/></svg></span>
      <div class="cpu">28%<br />CPU使用</div>
      <div class="tray">
        <svg width="14" height="9" viewBox="0 0 14 9"><path d="M1 8l6-6 6 6" fill="none" stroke="#fff" stroke-width="1.3"/></svg>
        <svg width="18" height="16" viewBox="0 0 18 16"><path d="M6 3h11v10H6zM1 4v3M4 4v3M0.5 7h4M2.5 7v3" fill="none" stroke="#fff"/></svg>
        <svg width="15" height="15" viewBox="0 0 15 15"><path d="M1 12a11 11 0 0111-11M3 13a8 8 0 018-8M6 13a5 5 0 015-5" fill="none" stroke="#aaa"/><circle cx="12" cy="12.5" r="2" fill="#fff"/></svg>
        <svg width="16" height="16" viewBox="0 0 16 16"><path d="M1 6h3l4-3v10l-4-3H1zM10 5q2 3 0 6M12 3q3 5 0 10" fill="none" stroke="#fff"/></svg>
        <svg class="kbd" width="24" height="15" viewBox="0 0 24 15"><path d="M.5.5h23v14H.5zM3 4h18M3 7h18M6 11h12" fill="none" stroke="#fff" stroke-dasharray="2 1"/></svg>
        <span>中</span>
        <svg class="sogou" width="16" height="16" viewBox="0 0 16 16"><rect width="16" height="16" rx="3" fill="#ea5a1c" transform="rotate(-8 8 8)"/><text x="8" y="13" font-family="Liberation Sans" font-weight="700" font-style="italic" font-size="13" fill="#fff" text-anchor="middle">S</text></svg>
      </div>
      <div class="clock">12:29<br />2018/11/18</div>
      <div class="notify">
        <svg width="16" height="18" viewBox="0 0 16 18"><path d="M0 1h16v11H6l-3 3v-3H0z" fill="#fff"/><path d="M3 4h10M3 6.5h10M3 9h10" stroke="#333"/></svg>
        <span class="badge">1</span>
      </div>
    </div>`;
  }

  render() {
    return html`
      <svg class="defs" width="0" height="0"><defs><linearGradient id="fld" x1="0" y1="0" x2="0" y2="1"><stop offset="0" stop-color="#fff6d8"/><stop offset="1" stop-color="#e8b53c"/></linearGradient></defs></svg>
      <div class="titlebar">
        <span class="logo"><svg width="12" height="12" viewBox="0 0 24 24"><path d="M12 2v20M7 8c-5 0-5 8 0 8h10c5 0 5-8 0-8" fill="none" stroke="#fff" stroke-width="3"/></svg></span>
        广联达BIM钢筋算量软件 GGJ2013 - [C:\\Users\\Administrator.PC-20141127NRHM\\Desktop\\白龙村-2018-02-03-20-08-17(2600版).GGJ12]
        <div class="wincontrols">
          <span><svg width="11" height="11" viewBox="0 0 11 11"><path d="M0 5.5h11" stroke="#888"/></svg></span>
          <span><svg width="11" height="11" viewBox="0 0 11 11"><path d="M.5 2.5h8v8h-8zM2.5 2.5v-2h8v8h-2" fill="none" stroke="#888"/></svg></span>
          <span><svg width="11" height="11" viewBox="0 0 11 11"><path d="M.5.5l10 10M10.5.5l-10 10" stroke="#888"/></svg></span>
        </div>
      </div>

      <div class="menubar">
        ${menus.map((m) => html`<span>${m}</span>`)}
        <span class="tool change">${ic('change')}<span>新建变更</span>${ic('caret', 12)}</span>
        <span class="tool xiaoer">${ic('xiao')}<span>广小二</span></span>
        <div class="right">
          <span class="lighter"></span>
          ${ic('user')}<span class="num">13907298339</span>${ic('caret', 12)}
          <span class="beans">造价豆:0</span>${ic('bell')}
          <span class="chaticon">${ic('chat')}</span><span>我要建议</span>
        </div>
      </div>

      <div class="toolbar">
        <div class="tgroup fixed">
          ${ic('doc')}<span class="t-open">${ic('open')}</span>${ic('caret', 12)}
          <span class="t-save">${ic('save')}</span><span class="sep"></span>
          <span class="t-undo">${ic('undo')}</span>${ic('caret', 12)}
          <span class="more t-more">&gt;&gt;</span>
        </div>
        <div class="tgroup wide">
          ${ic('paint')}<span class="t-paint">绘图</span>
          <b class="t-sigma">Σ</b><span class="t-sum">汇总计算</span>
          ${ic('calc')}<span class="t-cloud">云</span>
          <span class="more t-hiddenmore">&gt;&gt;</span>
          <span class="combo"></span>
          <div class="faded">
            <span>缩放</span><span class="f-caret0">${ic('caret', 12)}</span>
            <span class="f-hand">${ic('hand')}</span><span>平移</span><span class="f-caret1">${ic('caret', 12)}</span>
            <span class="f-rotate">${ic('rotate')}</span><span>屏幕旋转</span>${ic('caret', 12)}
            <span class="sep f-sep"></span>
            ${ic('floors')}<span class="f-floors">选择楼层</span>
            <span class="more f-more">&gt;&gt;</span>
          </div>
        </div>
      </div>

      <div class="main">
        <div class="nav">
          <div class="navtitle">模块导航栏<div>${ic('pin', 13)}${ic('close', 13)}</div></div>
          <div class="navbtn top">工程设置</div>
          <div class="navbtn pressed">绘图输入</div>
          <div class="navtree">
            <div class="navtools">${ic('expand')}${ic('collapse')}</div>
            <div class="treebody">${navTree.map((n) => this.navRow(n))}</div>
          </div>
          <div class="navbtn">单构件输入</div>
          <div class="navbtn">报表预览</div>
        </div>

        <div class="list">
          <div class="listtools">
            ${ic('plus')}<span class="l-new">新建</span><span class="l-caret">${ic('caret', 10)}</span>
            ${ic('del')}<span class="l-del">删除</span><span class="l-copy">${ic('copy')}</span><span>复制</span>
          </div>
          <div class="searchbox">搜索构件...</div>
          <div class="listtree">
            <div class="listroot">${chevron(true)}<span class="stub"></span>${ic('line')}<span>自定义线</span></div>
            ${zdyxTop.map((n) => this.zdyxRow(n))}
            <div class="skip"></div>
            ${zdyxBottom.map((n) => this.zdyxRow(n))}
          </div>
        </div>

        <div class="work">
          <div class="workstrip"></div>
          <div class="workinput"></div>
          <div class="workrow">
            <div class="frame">
              <div class="framepanel">
                <div class="toolrow">
                  <span class="tight">手动设置参考线</span>${ic('caret', 12)}<span class="sep"></span>
                  ${ic('level')}<span>设置标高</span><span class="more">&gt;&gt;</span>
                </div>
                <div class="toolrow2"><div>钩<i></i>${ic('endpoint')}<span>编辑端头</span></div></div>
                <div class="cad">${this.cadSide()}</div>
                <div class="framefoot">点</div>
              </div>
              <div class="framestatus">择标注进行修改或移动;<span class="corner"></span></div>
            </div>
            <div class="scroll">
              <span><svg width="10" height="6" viewBox="0 0 10 6"><path d="M1 5l4-4 4 4" fill="none" stroke="#444" stroke-width="1.6"/></svg></span>
              <i></i><b></b>
              <span><svg width="10" height="6" viewBox="0 0 10 6"><path d="M1 1l4 4 4-4" fill="none" stroke="#666" stroke-width="1.6"/></svg></span>
            </div>
          </div>
        </div>
      </div>

      <div class="statusbar">
        <div class="s0"></div>
        <div class="s1">${mix('层高:4.5m')}</div>
        <div class="s2">${mix('底标高:4.45m')}</div>
        <div class="s3">${mix('0')}</div>
        <div class="grow">${mix('输入范围: (0, 10000]之间的整数')}</div>
        <div class="s4">${mix('25.3 FPS')}</div>
      </div>

      ${this.taskbar()}

      ${this.editor()}
      ${this.dialog()}
      <div class="redbox r1"></div>
      <div class="redbox r2"></div>
      <div class="bubble">73</div>
      <div class="ime">
        <span class="logo-s">S</span>
        <div class="imebar">
          <span class="zh">中</span><span class="pun">°,</span>
          <svg class="m8" width="17" height="17" viewBox="0 0 17 17"><circle cx="8.5" cy="8.5" r="7.5" fill="none" stroke="#2074c6" stroke-width="1.6"/><path d="M5 10q3.5 3 7 0M6 6v1M11 6v1" fill="none" stroke="#2074c6" stroke-width="1.4"/></svg>
          <svg class="m8" width="12" height="17" viewBox="0 0 12 17"><rect x="3" y="0" width="6" height="11" rx="3" fill="#2074c6"/><path d="M1 8c0 5 10 5 10 0M6 13v3M3 16h6" fill="none" stroke="#2074c6" stroke-width="1.4"/></svg>
          <svg class="m6" width="17" height="13" viewBox="0 0 17 13"><rect width="17" height="13" rx="1.5" fill="#2074c6"/><path d="M2 3.5h13M2 6.5h13" stroke="#fff" stroke-dasharray="1.5 1"/><path d="M4 10h9" stroke="#fff"/></svg>
          <svg class="m3" width="18" height="16" viewBox="0 0 18 16"><circle cx="7" cy="4" r="3.5" fill="#b6c2cf"/><path d="M1 15c0-5 3-6 6-6s4 1 5 2v4z" fill="#b6c2cf"/><rect x="8" y="10" width="10" height="6" fill="#fff"/><text x="13" y="15.5" font-size="6" font-family="Liberation Sans" text-anchor="middle" fill="#889">27</text></svg>
          <svg class="m5" width="16" height="14" viewBox="0 0 16 14"><path d="M5 0L0 3l2 3 2-1v9h8V5l2 1 2-3-5-3-3 1z" fill="#2074c6"/></svg>
          <svg width="16" height="16" viewBox="0 0 16 16"><path d="M1 15l7-7c-1-3 1-7 6-7l-3 3 1 2 2 1 2-2c1 4-3 7-7 6l-6 6z" fill="#2074c6"/></svg>
        </div>
      </div>
    `;
  }
}
